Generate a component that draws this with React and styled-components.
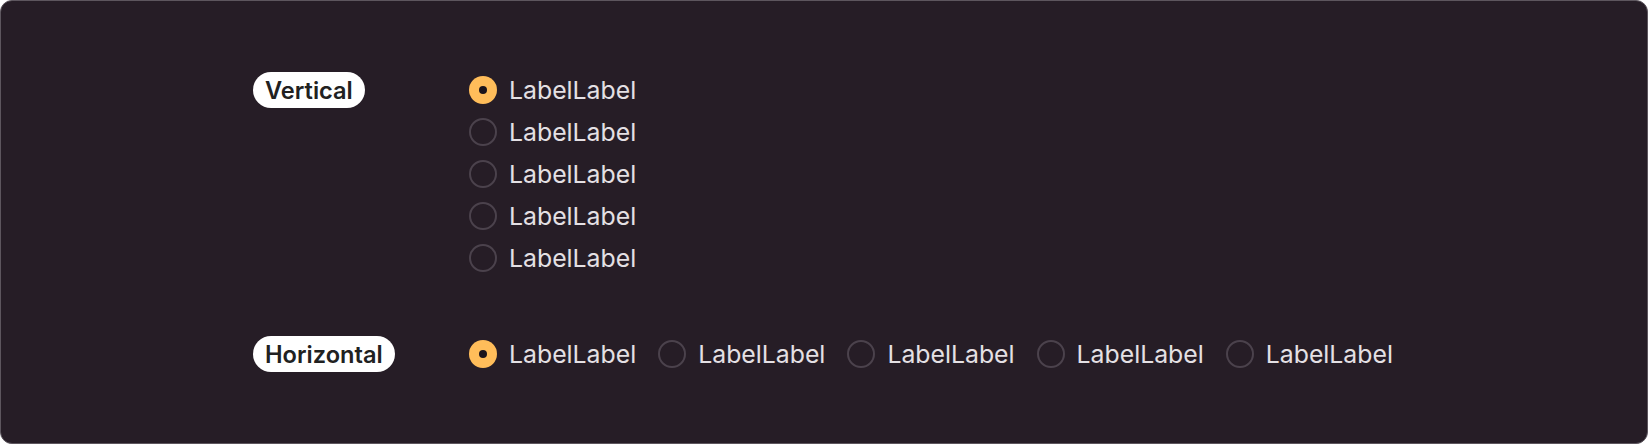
import React from "react";
import styled, { createGlobalStyle } from "styled-components";

const Global = createGlobalStyle`
  html, body { margin: 0; padding: 0; background: #ffffff; }
  body { font-family: "Inter", "Noto Sans", sans-serif; }
  * { box-sizing: border-box; }
`;

const Card = styled.div`
  width: 1648px;
  height: 444px;
  background: #261d26;
  border: 1px solid #5d565e;
  border-radius: 12px;
  padding: 71px 0 0 252px;
  display: flex;
  flex-direction: column;
  gap: 64px;
`;

const Section = styled.div`
  display: grid;
  grid-template-columns: 216px 1fr;
  align-items: start;
`;

const Pill = styled.div`
  justify-self: start;
  height: 36px;
  padding: 0 12px;
  border-radius: 18px;
  background: #ffffff;
  color: #212121;
  font-size: 23.6px;
  font-weight: 600;
  display: flex;
  align-items: center;
`;

const Group = styled.div`
  padding-top: 4px;
  display: flex;
  flex-direction: ${(p) => (p.$horizontal ? "row" : "column")};
  gap: ${(p) => (p.$horizontal ? "22px" : "14px")};
`;

const Option = styled.label`
  display: flex;
  align-items: center;
  gap: 12px;
  height: 28px;
  color: #e4e0e4;
  font-size: 24.8px;
  font-weight: 400;
`;

const Circle = styled.span`
  width: 28px;
  height: 28px;
  border-radius: 50%;
  flex: none;
  display: flex;
  align-items: center;
  justify-content: center;
  background: ${(p) => (p.$checked ? "#ffbd5a" : "transparent")};
  border: ${(p) => (p.$checked ? "none" : "2px solid #4b424c")};
  &::after {
    content: "";
    display: ${(p) => (p.$checked ? "block" : "none")};
    width: 8px;
    height: 8px;
    border-radius: 50%;
    background: #1b141b;
  }
`;

const Text = styled.span`
  line-height: 28px;
`;

const labels = [0, 1, 2, 3, 4];

function Radios({ horizontal }) {
  return (
    <Group $horizontal={horizontal}>
      {labels.map((i) => (
        <Option key={i}>
          <Circle $checked={i === 0} />
          <Text>LabelLabel</Text>
        </Option>
      ))}
    </Group>
  );
}

export default function App() {
  return (
    <>
      <Global />
      <Card>
        <Section>
          <Pill>Vertical</Pill>
          <Radios />
        </Section>
        <Section>
          <Pill>Horizontal</Pill>
          <Radios horizontal />
        </Section>
      </Card>
    </>
  );
}
